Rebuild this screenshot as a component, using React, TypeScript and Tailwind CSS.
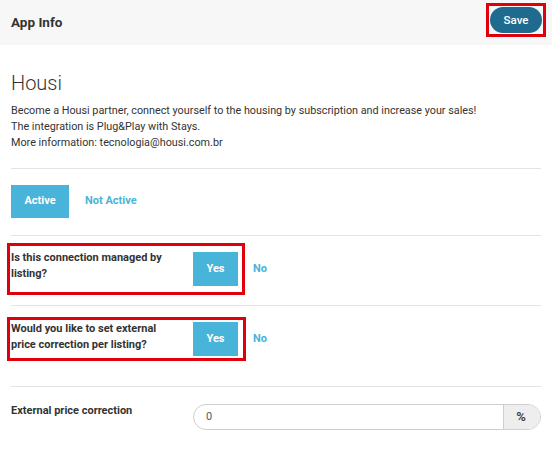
import React from "react";

const Divider = () => <div className="h-px bg-[#e3e3e3]" />;

export default function App() {
  return (
    <div className="w-[552px] h-[456px] bg-white font-['Roboto',sans-serif] text-[#333] overflow-hidden">
      <div className="h-[45px] bg-[#f7f7f7] flex items-center justify-between pl-[11px] pr-[6px]">
        <div className="text-[13.5px] font-bold text-[#333]">App Info</div>
        <div className="border-[3px] border-[#e0000b] p-px mt-[-5px]">
          <button className="h-[26px] w-[52px] rounded-full bg-[#1e6b8f] text-white text-[11.5px] font-medium">
            Save
          </button>
        </div>
      </div>

      <div className="px-[11px]">
        <div className="mt-[25px] text-[20px] leading-[26px] font-light text-[#333]">Housi</div>
        <div className="mt-[7px] text-[10.8px] leading-[16px] text-[#333]">
          <div>Become a Housi partner, connect yourself to the housing by subscription and increase your sales!</div>
          <div>The integration is Plug&amp;Play with Stays.</div>
          <div>More information: tecnologia@housi.com.br</div>
        </div>
        <div className="mt-[17px]">
          <Divider />
        </div>

        <div className="mt-[16px] flex gap-[5px]">
          <button className="h-[33px] w-[58px] bg-[#48b4d9] text-white text-[11px] font-bold">Active</button>
          <button className="h-[33px] px-[11px] text-[#48b4d9] text-[11px] font-bold">Not Active</button>
        </div>
        <div className="mt-[17px]">
          <Divider />
        </div>

        <div className="mt-[7px] flex items-center">
          <div className="ml-[-4px] w-[238px] h-[52px] border-[3px] border-[#e0000b] flex items-center pl-px">
            <div className="w-[182px] pr-[14px] text-[11px] leading-[16px] font-bold text-[#333] mb-[6px]">
              Is this connection managed by listing?
            </div>
            <button className="h-[34px] w-[45px] bg-[#48b4d9] text-white text-[11px] font-bold">Yes</button>
          </div>
          <button className="ml-[8px] text-[#48b4d9] text-[11px] font-bold">No</button>
        </div>
        <div className="mt-[10px]">
          <Divider />
        </div>

        <div className="mt-[11px] flex items-center">
          <div className="ml-[-4px] w-[239px] h-[44px] border-[3px] border-[#e0000b] flex items-center pl-px">
            <div className="w-[182px] pr-[14px] text-[11px] leading-[16px] font-bold text-[#333] mb-[4px]">
              Would you like to set external price correction per listing?
            </div>
            <button className="h-[34px] w-[45px] bg-[#48b4d9] text-white text-[11px] font-bold">Yes</button>
          </div>
          <button className="ml-[7px] text-[#48b4d9] text-[11px] font-bold">No</button>
        </div>
        <div className="mt-[25px]">
          <Divider />
        </div>

        <div className="mt-[17px] flex items-start">
          <div className="w-[182px] text-[11px] leading-[16px] font-bold text-[#333] mt-[-1px]">
            External price correction
          </div>
          <div className="flex-1 h-[26px] rounded-full border border-[#cfcfcf] flex overflow-hidden">
            <div className="flex-1 flex items-center pl-[12px] text-[11px] text-[#555]">0</div>
            <div className="w-[37px] bg-[#eeeeee] border-l border-[#cfcfcf] flex items-center justify-center text-[13px] font-bold text-[#444] pr-[2px]">
              %
            </div>
          </div>
        </div>
      </div>
    </div>
  );
}
